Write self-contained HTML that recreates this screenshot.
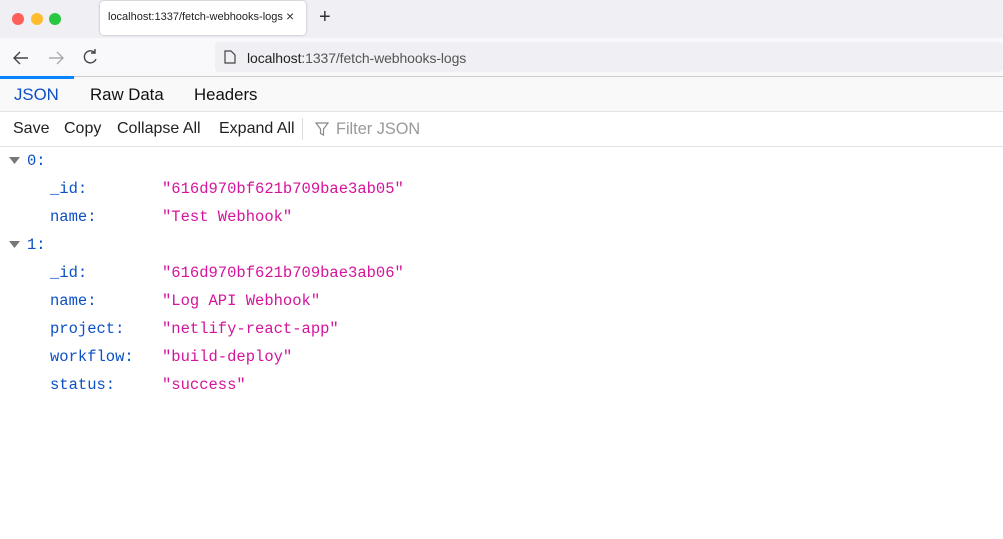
<!DOCTYPE html>
<html><head><style>
body{margin:0;width:1003px;height:539px;position:relative;background:#fff;font-family:"Liberation Sans",sans-serif;overflow:hidden}
.a{position:absolute}
.m{font-family:"Liberation Mono",monospace;font-size:15.5px;position:absolute;line-height:18px}
.k{color:#0b50c6}.v{color:#d4149b}
.t{position:absolute;top:120px;font-size:16px;color:#222}
</style></head><body>
<div class="a" style="left:0;top:0;width:1003px;height:38px;background:#f0eff4"></div>
<div class="a" style="left:12px;top:13px;width:12px;height:12px;border-radius:50%;background:#fe5f57"></div>
<div class="a" style="left:31px;top:13px;width:12px;height:12px;border-radius:50%;background:#febc2e"></div>
<div class="a" style="left:49px;top:13px;width:12px;height:12px;border-radius:50%;background:#28c840"></div>
<div class="a" style="left:100px;top:1px;width:206px;height:34px;background:#fff;border-radius:4px;box-shadow:0 0 2px rgba(0,0,0,.3)"></div>
<div class="a" style="left:108px;top:11px;font-size:11px;color:#222">localhost:1337/fetch-webhooks-logs</div>
<div class="a" style="left:286px;top:8px;font-size:14px;color:#333">×</div>
<div class="a" style="left:319px;top:6px;font-size:20px;color:#333">+</div>
<div class="a" style="left:0;top:38px;width:1003px;height:38px;background:#f9f9fb"></div>
<div class="a" style="left:215px;top:42px;width:788px;height:30px;background:#f0eff4;border-radius:4px"></div>
<svg class="a" style="left:0;top:38px" width="110" height="38"><g fill="none" stroke="#444" stroke-width="1.4"><path d="M28 20H14M20 14l-6 6 6 6"/><path d="M49 20h14M57 14l6 6-6 6" stroke="#aaa"/><path d="M95 15a6 6 0 1 0 1 6"/><path d="M95 11v4h-4"/></g></svg>
<svg class="a" style="left:224px;top:50px" width="12" height="14"><path d="M1 1h6l4 4v8H1z" fill="none" stroke="#444" stroke-width="1.2"/></svg>
<div class="a" style="left:247px;top:50px;font-size:14px;color:#222;letter-spacing:-0.1px">localhost<span style="color:#555">:1337/fetch-webhooks-logs</span></div>
<div class="a" style="left:0;top:76px;width:1003px;height:1px;background:#ccc"></div>
<div class="a" style="left:0;top:77px;width:1003px;height:34px;background:#f9f9f9"></div>
<div class="a" style="left:0;top:76px;width:74px;height:3px;background:#0a84ff"></div>
<div class="a" style="left:14px;top:85px;font-size:16.8px;color:#0b50c6">JSON</div>
<div class="a" style="left:90px;top:85px;font-size:16.8px;color:#111">Raw Data</div>
<div class="a" style="left:194px;top:85px;font-size:16.8px;color:#111">Headers</div>
<div class="a" style="left:0;top:111px;width:1003px;height:1px;background:#e3e3e3"></div>
<div class="t" style="left:13px">Save</div>
<div class="t" style="left:64px">Copy</div>
<div class="t" style="left:117px">Collapse All</div>
<div class="t" style="left:219px">Expand All</div>
<div class="a" style="left:302px;top:118px;width:1px;height:22px;background:#ddd"></div>
<svg class="a" style="left:315px;top:122px" width="14" height="15"><path d="M1 1h12L8.5 7v6l-3-1.5V7z" fill="none" stroke="#888" stroke-width="1.2"/></svg>
<div class="a" style="left:336px;top:120px;font-size:16.3px;color:#999">Filter JSON</div>
<div class="a" style="left:0;top:146px;width:1003px;height:1px;background:#e3e3e3"></div>
<svg class="a" style="left:9px;top:156px" width="12" height="10"><path d="M0 1h11L5.5 8z" fill="#777"/></svg>
<svg class="a" style="left:9px;top:240px" width="12" height="10"><path d="M0 1h11L5.5 8z" fill="#777"/></svg>
<div class="m k" style="left:27px;top:152px">0:</div>
<div class="m k" style="left:50px;top:180px">_id:</div><div class="m v" style="left:162px;top:180px">"616d970bf621b709bae3ab05"</div>
<div class="m k" style="left:50px;top:208px">name:</div><div class="m v" style="left:162px;top:208px">"Test Webhook"</div>
<div class="m k" style="left:27px;top:236px">1:</div>
<div class="m k" style="left:50px;top:264px">_id:</div><div class="m v" style="left:162px;top:264px">"616d970bf621b709bae3ab06"</div>
<div class="m k" style="left:50px;top:292px">name:</div><div class="m v" style="left:162px;top:292px">"Log API Webhook"</div>
<div class="m k" style="left:50px;top:320px">project:</div><div class="m v" style="left:162px;top:320px">"netlify-react-app"</div>
<div class="m k" style="left:50px;top:348px">workflow:</div><div class="m v" style="left:162px;top:348px">"build-deploy"</div>
<div class="m k" style="left:50px;top:376px">status:</div><div class="m v" style="left:162px;top:376px">"success"</div>
</body></html>
